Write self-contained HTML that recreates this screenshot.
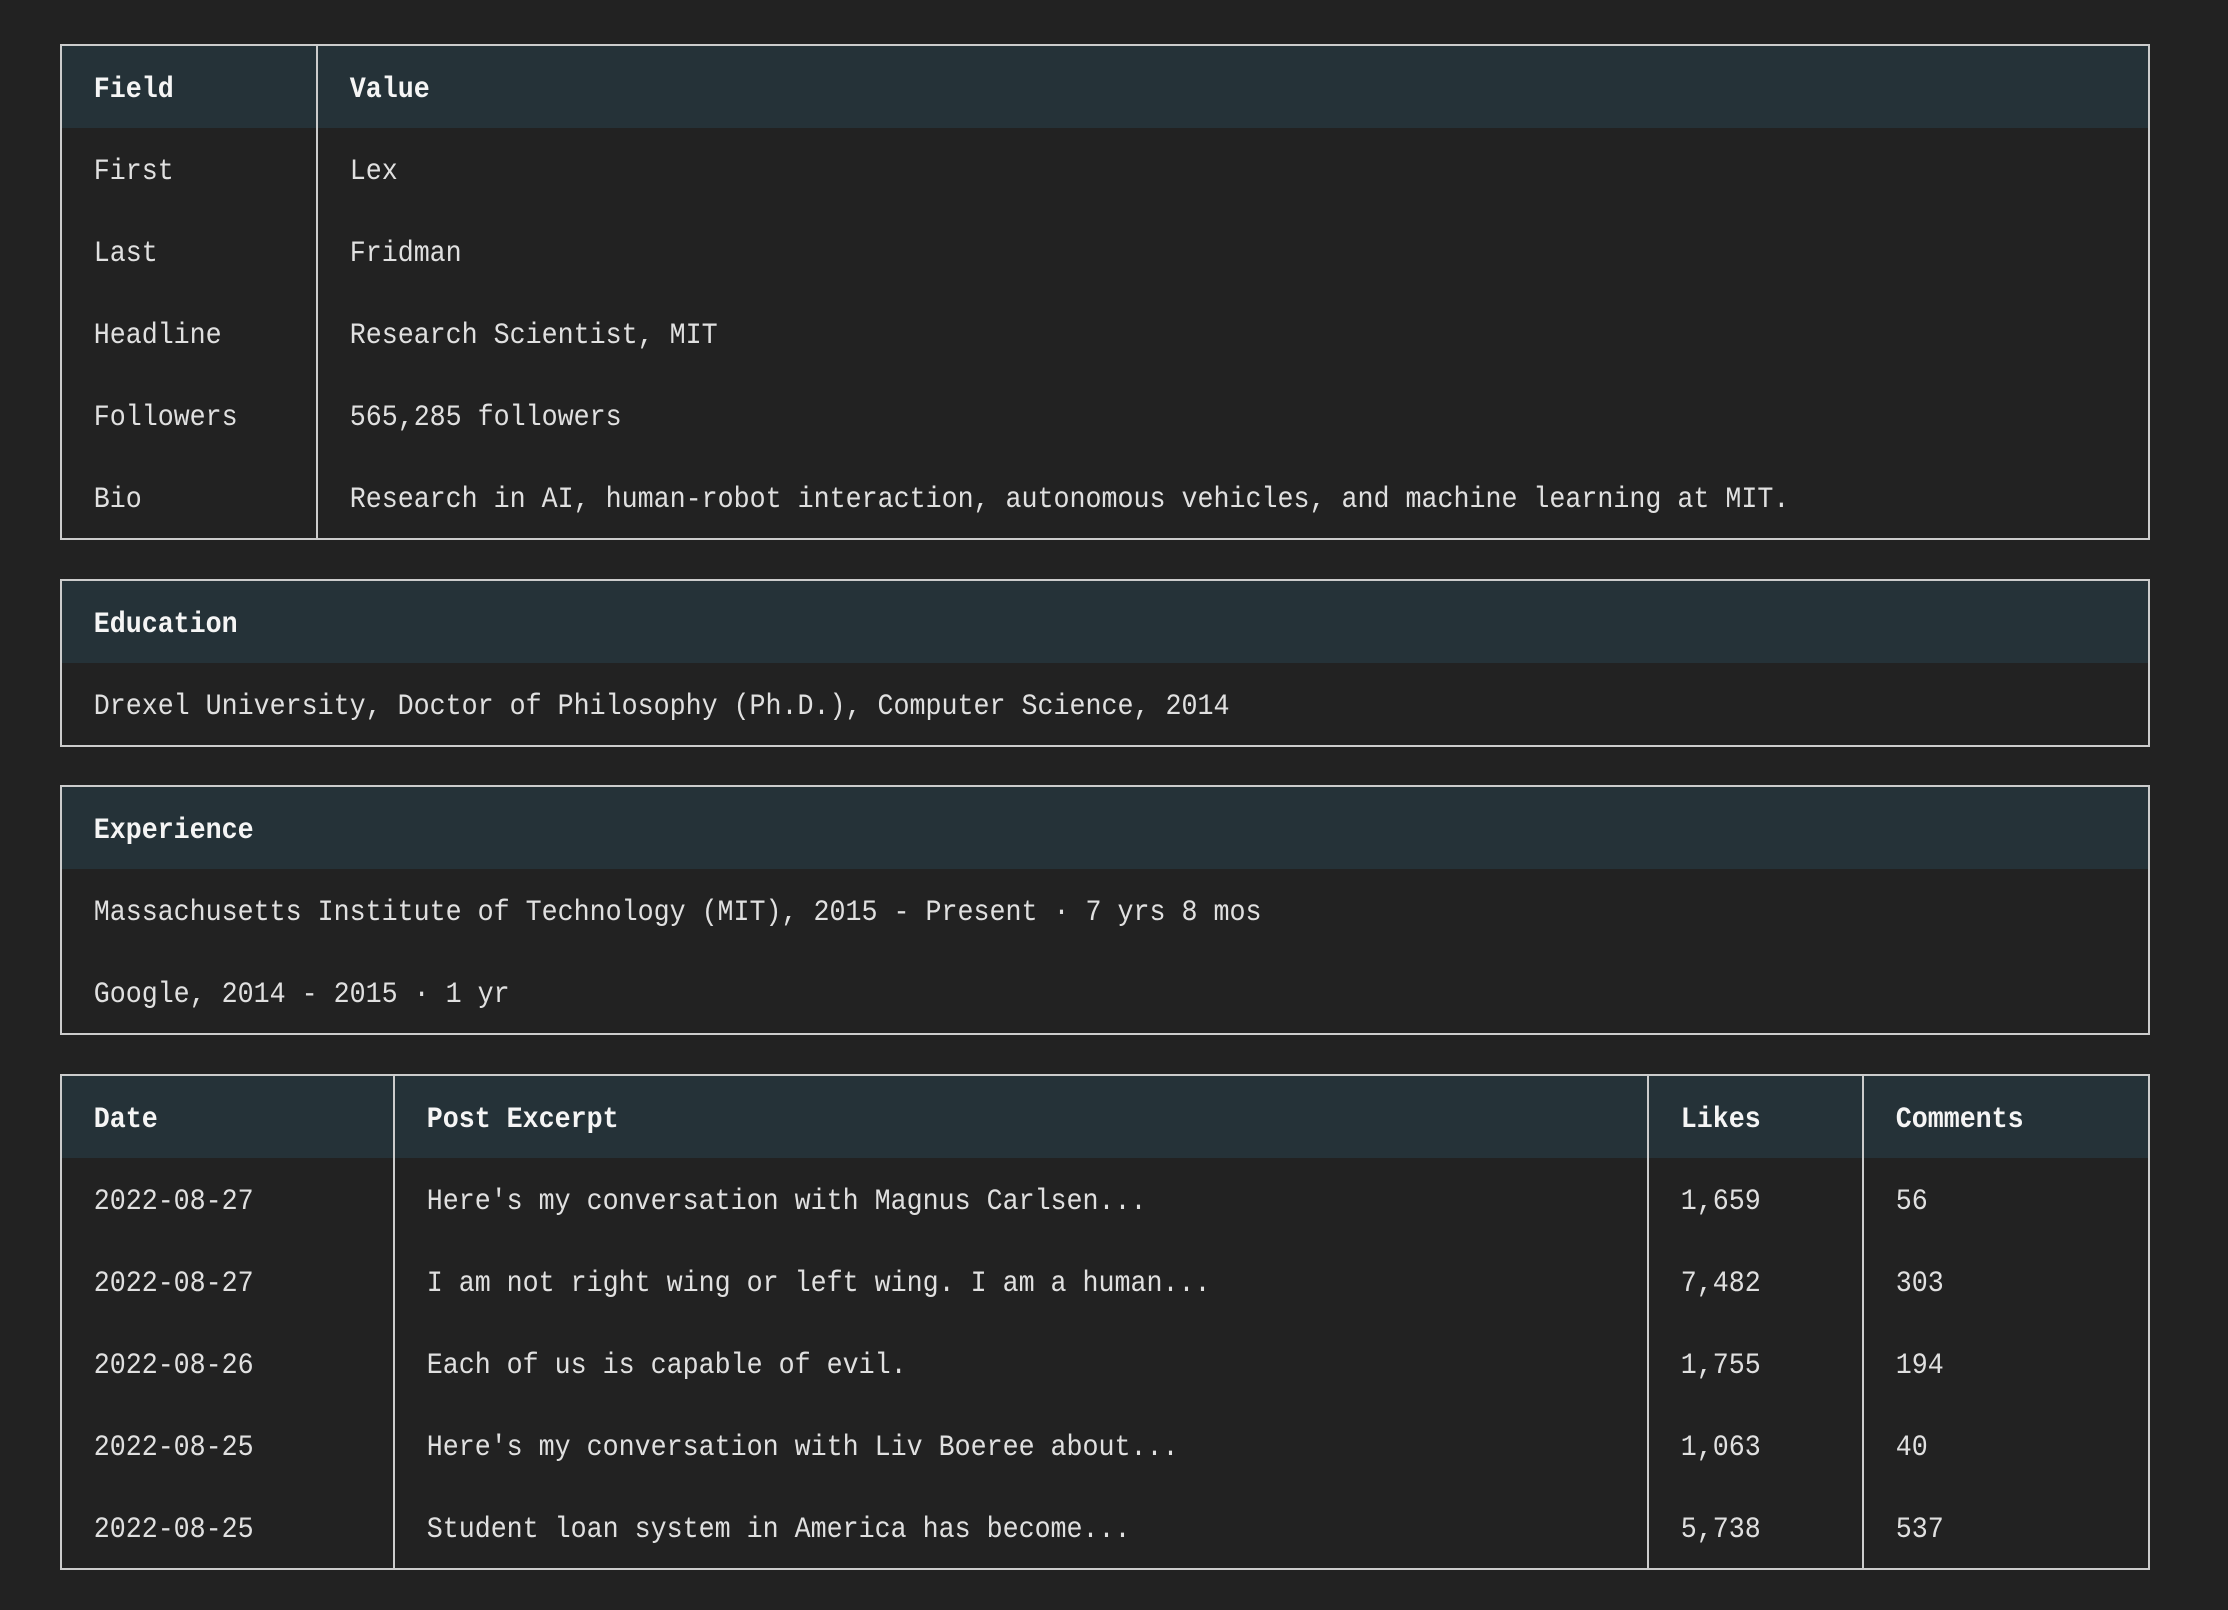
<!DOCTYPE html>
<html><head><meta charset="utf-8"><style>
html,body{margin:0;padding:0;background:#222222;width:2228px;height:1610px;overflow:hidden}
.b,.h,.v,.t{position:absolute;box-sizing:border-box}
.b{left:60px;width:2090px;border:2px solid #cccccc}
.h{left:62px;width:2086px;height:82px;background:#253238}
.v{width:2px;background:#cccccc}
.t{font:26.67px/82px "Liberation Mono",monospace;color:#e0e0e0;white-space:pre;height:82px;transform:scaleY(1.1);transform-origin:0 48px;margin-top:4px;margin-left:-.3px}
.s{font-weight:700;color:#f5f5f5}
</style></head><body>
<div class="h" style="top:46px"></div><div class="b" style="top:44px;height:496px"></div><div class="v" style="left:316px;top:46px;height:492px"></div>
<div class="t s" style="left:94px;top:46px">Field</div><div class="t s" style="left:350px;top:46px">Value</div>
<div class="t" style="left:94px;top:128px">First</div><div class="t" style="left:350px;top:128px">Lex</div>
<div class="t" style="left:94px;top:210px">Last</div><div class="t" style="left:350px;top:210px">Fridman</div>
<div class="t" style="left:94px;top:292px">Headline</div><div class="t" style="left:350px;top:292px">Research Scientist, MIT</div>
<div class="t" style="left:94px;top:374px">Followers</div><div class="t" style="left:350px;top:374px">565,285 followers</div>
<div class="t" style="left:94px;top:456px">Bio</div><div class="t" style="left:350px;top:456px">Research in AI, human-robot interaction, autonomous vehicles, and machine learning at MIT.</div>

<div class="h" style="top:581px"></div><div class="b" style="top:579px;height:168px"></div>
<div class="t s" style="left:94px;top:581px">Education</div>
<div class="t" style="left:94px;top:663px">Drexel University, Doctor of Philosophy (Ph.D.), Computer Science, 2014</div>

<div class="h" style="top:787px"></div><div class="b" style="top:785px;height:250px"></div>
<div class="t s" style="left:94px;top:787px">Experience</div>
<div class="t" style="left:94px;top:869px">Massachusetts Institute of Technology (MIT), 2015 - Present · 7 yrs 8 mos</div>
<div class="t" style="left:94px;top:951px">Google, 2014 - 2015 · 1 yr</div>

<div class="h" style="top:1076px"></div><div class="b" style="top:1074px;height:496px"></div>
<div class="v" style="left:393px;top:1076px;height:492px"></div><div class="v" style="left:1647px;top:1076px;height:492px"></div><div class="v" style="left:1862px;top:1076px;height:492px"></div>
<div class="t s" style="left:94px;top:1076px">Date</div><div class="t s" style="left:427px;top:1076px">Post Excerpt</div><div class="t s" style="left:1681px;top:1076px">Likes</div><div class="t s" style="left:1896px;top:1076px">Comments</div>
<div class="t" style="left:94px;top:1158px">2022-08-27</div><div class="t" style="left:427px;top:1158px">Here's my conversation with Magnus Carlsen...</div><div class="t" style="left:1681px;top:1158px">1,659</div><div class="t" style="left:1896px;top:1158px">56</div>
<div class="t" style="left:94px;top:1240px">2022-08-27</div><div class="t" style="left:427px;top:1240px">I am not right wing or left wing. I am a human...</div><div class="t" style="left:1681px;top:1240px">7,482</div><div class="t" style="left:1896px;top:1240px">303</div>
<div class="t" style="left:94px;top:1322px">2022-08-26</div><div class="t" style="left:427px;top:1322px">Each of us is capable of evil.</div><div class="t" style="left:1681px;top:1322px">1,755</div><div class="t" style="left:1896px;top:1322px">194</div>
<div class="t" style="left:94px;top:1404px">2022-08-25</div><div class="t" style="left:427px;top:1404px">Here's my conversation with Liv Boeree about...</div><div class="t" style="left:1681px;top:1404px">1,063</div><div class="t" style="left:1896px;top:1404px">40</div>
<div class="t" style="left:94px;top:1486px">2022-08-25</div><div class="t" style="left:427px;top:1486px">Student loan system in America has become...</div><div class="t" style="left:1681px;top:1486px">5,738</div><div class="t" style="left:1896px;top:1486px">537</div>
</body></html>
